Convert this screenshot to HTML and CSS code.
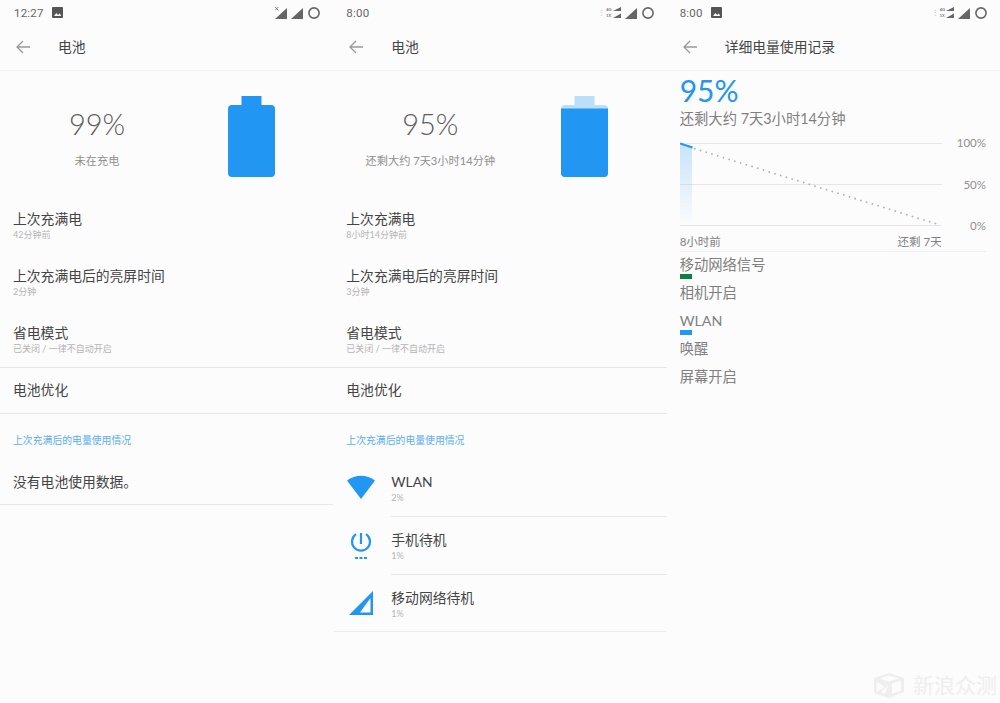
FILE: index.html
```html
<!DOCTYPE html>
<html lang="zh-CN">
<head>
<meta charset="UTF-8" />
<title>电池</title>
<link rel="stylesheet" href="styles.css">
</head>
<body>

<div class="screens">

  <!-- Screen 1: not charging -->
  <section class="screen">
    <div class="status">
      <span class="time">12:27</span>
      <svg class="pic" viewBox="0 0 11 11"><path d="M1 0h9a1 1 0 0 1 1 1v9a1 1 0 0 1-1 1H1a1 1 0 0 1-1-1V1a1 1 0 0 1 1-1z" fill="#555"/><path d="M2 9l2.4-3 1.7 2 1.6-1.7L9.2 9z" fill="#fcfcfc"/></svg>
      <span class="status-right">
        <svg class="sig" viewBox="0 0 12 12"><path d="M12 1v11H0z" fill="#666"/><path d="M0 0l3.4 3.4M3.4 0L0 3.4" stroke="#666" stroke-width=".8"/></svg>
        <svg class="sig" viewBox="0 0 12 12"><path d="M12 1v11H0z" fill="#666"/></svg>
        <svg class="ring" viewBox="0 0 12 12"><circle cx="6" cy="6" r="5.1" fill="none" stroke="#666" stroke-width="1.6"/></svg>
      </span>
    </div>
    <header class="bar">
      <svg class="back" viewBox="0 0 14 14"><path d="M14 7H1M7 1L1 7l6 6" fill="none" stroke="#999" stroke-width="1.3"/></svg>
      <h1>电池</h1>
    </header>
    <div class="hero">
      <div class="hero-text">
        <div class="pct">99%</div>
        <div class="remain">未在充电</div>
      </div>
      <svg class="batt" viewBox="0 0 47 81"><path d="M13.500 0h20v9H43a4 4 0 0 1 4 4v64a4 4 0 0 1-4 4H4a4 4 0 0 1-4-4V13a4 4 0 0 1 4-4h9.500z" fill="#2196f3"/></svg>
    </div>
    <div class="row"><div class="title">上次充满电</div><div class="sub">42分钟前</div></div>
    <div class="row"><div class="title">上次充满电后的亮屏时间</div><div class="sub">2分钟</div></div>
    <div class="row row-last"><div class="title">省电模式</div><div class="sub">已关闭 / 一律不自动开启</div></div>
    <div class="row-plain">电池优化</div>
    <div class="section-label">上次充满后的电量使用情况</div>
    <div class="row-empty">没有电池使用数据。</div>
  </section>

  <!-- Screen 2: usage list -->
  <section class="screen">
    <div class="status">
      <span class="time">8:00</span>
      <span class="status-right">
        <span class="dual">
          <span class="arrows">⋮</span>
          <span class="sims"><span>4G</span><span>1X</span></span>
          <svg class="mini" viewBox="0 0 8 11"><path d="M8 0v4H0zM8 6.500V11H0z" fill="#666"/></svg>
        </span>
        <svg class="sig" viewBox="0 0 12 12"><path d="M12 1v11H0z" fill="#666"/></svg>
        <svg class="ring" viewBox="0 0 12 12"><circle cx="6" cy="6" r="5.1" fill="none" stroke="#666" stroke-width="1.6"/></svg>
      </span>
    </div>
    <header class="bar">
      <svg class="back" viewBox="0 0 14 14"><path d="M14 7H1M7 1L1 7l6 6" fill="none" stroke="#999" stroke-width="1.3"/></svg>
      <h1>电池</h1>
    </header>
    <div class="hero">
      <div class="hero-text">
        <div class="pct">95%</div>
        <div class="remain">还剩大约 7天3小时14分钟</div>
      </div>
      <svg class="batt" viewBox="0 0 47 81"><path d="M13.500 0h20v9H43a4 4 0 0 1 4 4v64a4 4 0 0 1-4 4H4a4 4 0 0 1-4-4V13a4 4 0 0 1 4-4h9.500z" fill="#bbdefb"/><path d="M0 12.500h47V77a4 4 0 0 1-4 4H4a4 4 0 0 1-4-4z" fill="#2196f3"/></svg>
    </div>
    <div class="row"><div class="title">上次充满电</div><div class="sub">8小时14分钟前</div></div>
    <div class="row"><div class="title">上次充满电后的亮屏时间</div><div class="sub">3分钟</div></div>
    <div class="row row-last"><div class="title">省电模式</div><div class="sub">已关闭 / 一律不自动开启</div></div>
    <div class="row-plain">电池优化</div>
    <div class="section-label">上次充满后的电量使用情况</div>

    <div class="usage">
      <svg class="usage-icon" viewBox="0 0 30 30"><path d="M1 8.500C9 2.200 21 2.200 29 8.500L15 27z" fill="#2196f3"/></svg>
      <div class="usage-text"><div class="title">WLAN</div><div class="sub">2%</div></div>
    </div>
    <div class="usage">
      <svg class="usage-icon" viewBox="0 0 30 30"><path d="M15 3v11" stroke="#2196f3" stroke-width="2.200" fill="none"/><path d="M10 4.200a9 9 0 1 0 10 0" stroke="#2196f3" stroke-width="2.200" fill="none"/><path d="M9 28h3M13.500 28h3M18 28h3" stroke="#2196f3" stroke-width="2" fill="none"/></svg>
      <div class="usage-text"><div class="title">手机待机</div><div class="sub">1%</div></div>
    </div>
    <div class="usage usage-last">
      <svg class="usage-icon" viewBox="0 0 30 30"><path fill-rule="evenodd" d="M27 3v24H3zM24.500 10L14 24.500h10.500z" fill="#2196f3"/></svg>
      <div class="usage-text"><div class="title">移动网络待机</div><div class="sub">1%</div></div>
    </div>
  </section>

  <!-- Screen 3: detailed history -->
  <section class="screen">
    <div class="status">
      <span class="time">8:00</span>
      <svg class="pic" viewBox="0 0 11 11"><path d="M1 0h9a1 1 0 0 1 1 1v9a1 1 0 0 1-1 1H1a1 1 0 0 1-1-1V1a1 1 0 0 1 1-1z" fill="#555"/><path d="M2 9l2.4-3 1.7 2 1.6-1.7L9.2 9z" fill="#fcfcfc"/></svg>
      <span class="status-right">
        <span class="dual">
          <span class="arrows">⋮</span>
          <span class="sims"><span>4G</span><span>1X</span></span>
          <svg class="mini" viewBox="0 0 8 11"><path d="M8 0v4H0zM8 6.500V11H0z" fill="#666"/></svg>
        </span>
        <svg class="sig" viewBox="0 0 12 12"><path d="M12 1v11H0z" fill="#666"/></svg>
        <svg class="ring" viewBox="0 0 12 12"><circle cx="6" cy="6" r="5.1" fill="none" stroke="#666" stroke-width="1.6"/></svg>
      </span>
    </div>
    <header class="bar">
      <svg class="back" viewBox="0 0 14 14"><path d="M14 7H1M7 1L1 7l6 6" fill="none" stroke="#999" stroke-width="1.3"/></svg>
      <h1>详细电量使用记录</h1>
    </header>
    <div class="detail">
      <div class="detail-pct">95%</div>
      <div class="detail-remain">还剩大约 7天3小时14分钟</div>

      <div class="chart">
        <svg class="plot" viewBox="0 0 262 86">
          <defs>
            <linearGradient id="fade" x1="0" y1="0" x2="0" y2="1">
              <stop offset="0" stop-color="#2196f3" stop-opacity=".24"/>
              <stop offset="1" stop-color="#2196f3" stop-opacity="0"/>
            </linearGradient>
          </defs>
          <path d="M0 1.500H262M0 42.500H262M0 83.500H262" stroke="#e6e6e6" stroke-width="1"/>
          <path d="M0 2L12 6V84H0z" fill="url(#fade)"/>
          <path d="M14 6.500L260 83" stroke="#a3b2bc" stroke-width="1.600" stroke-dasharray="1.600 4.400" fill="none"/>
          <path d="M0 1.500L12.500 5.500" stroke="#2196f3" stroke-width="2" fill="none"/>
        </svg>
        <div class="y-labels"><span>100%</span><span>50%</span><span>0%</span></div>
      </div>
      <div class="x-labels"><span>8小时前</span><span>还剩 7天</span></div>

      <div class="track track-first">移动网络信号</div>
      <div class="track-bar track-green"></div>
      <div class="track track-after">相机开启</div>
      <div class="track track-next">WLAN</div>
      <div class="track-bar track-blue"></div>
      <div class="track track-after">唤醒</div>
      <div class="track track-next">屏幕开启</div>
    </div>
  </section>
</div>

<!-- Watermark -->
<div class="mark">
  <svg class="mark-logo" viewBox="0 0 30 25"><path d="M15 0l15 5v14l-15 6-15-5V5z" fill="#eee"/><path d="M5 5.500l10-3 10 3-10 3zM2.500 8.500l8 5.500-8 5zM14 12l-3 9-4-1.500zM18 10.500l9-3v10l-9 3.500z" fill="#fcfcfc"/></svg>
  <span>新浪众测</span>
</div>

</body>
</html>
```

FILE: styles.css
```css
/* General styling */
html, body {
  margin: 0;
  height: 703px;
  overflow: hidden;
}

body {
  position: relative;
  background: #fcfcfc;
  color: #444;
  font-family: Lato, "Noto Sans CJK SC", sans-serif;
}

.screens {
  display: grid;
  grid-template-columns: repeat(3, 1fr);
}

.screen {
  min-width: 0;
}

/* Status bar */
.status {
  display: flex;
  align-items: center;
  height: 25px;
  padding: 0 13px 0 14px;
  color: #666;
}

.screen + .screen .status {
  padding-left: 13px;
}

.time {
  font-family: Roboto, sans-serif;
  font-size: 11.500px;
  letter-spacing: 0.2px;
}

.pic {
  width: 11px;
  height: 11px;
  margin-left: 8px;
}

.status-right {
  display: flex;
  align-items: center;
  gap: 4px;
  margin-left: auto;
}

.sig {
  width: 12px;
  height: 12px;
}

.ring {
  width: 12px;
  height: 12px;
  margin-left: 1px;
}

.dual {
  display: flex;
  align-items: center;
  gap: 1px;
  height: 12px;
}

.arrows {
  font-size: 7px;
  line-height: 1;
  color: #bbb;
}

.sims {
  display: flex;
  flex-direction: column;
  font-family: "Liberation Sans", sans-serif;
  font-size: 4px;
  line-height: 6px;
  font-weight: 700;
  color: #777;
}

.mini {
  width: 8px;
  height: 11px;
}

/* Toolbar */
.bar {
  display: flex;
  align-items: center;
  height: 43px;
  padding-bottom: 2px;
  border-bottom: 1px solid #f0f0f0;
}

.back {
  width: 14px;
  height: 14px;
  margin-left: 16px;
}

.bar h1 {
  margin: 0 0 0 28px;
  font-size: 13.800px;
  line-height: 18px;
  font-weight: 400;
  color: #444;
}

/* Battery header */
.hero {
  display: flex;
  align-items: flex-start;
  height: 129px;
}

.hero-text {
  width: 194px;
  padding-top: 36px;
  text-align: center;
}

.pct {
  font-size: 29px;
  line-height: 34px;
  font-weight: 300;
  color: #5c5c5c;
}

.remain {
  margin-top: 12px;
  font-size: 11.200px;
  line-height: 16px;
  color: #909090;
}

.batt {
  width: 47px;
  height: 81px;
  margin: 25px 0 0 33.500px;
}

/* List rows */
.title {
  font-size: 13.800px;
  line-height: 18px;
  color: #444;
}

.sub {
  font-size: 9px;
  line-height: 14px;
  color: #b4b4b4;
}

.row {
  height: 57px;
  box-sizing: border-box;
  padding: 10px 13px 0;
}

.row-last {
  height: 54px;
  border-bottom: 1px solid #e8e8e8;
}

.row-plain {
  height: 46px;
  box-sizing: border-box;
  padding: 0 13px;
  font-size: 13.800px;
  line-height: 44px;
  border-bottom: 1px solid #e8e8e8;
}

.section-label {
  padding: 19px 13px 12px;
  font-size: 9.850px;
  line-height: 14px;
  color: #5aaef0;
}

.row-empty {
  height: 46px;
  box-sizing: border-box;
  padding: 0 13px;
  font-size: 13.800px;
  line-height: 45px;
  border-bottom: 1px solid #e8e8e8;
}

/* Usage list */
.usage {
  display: flex;
  align-items: flex-start;
  height: 58px;
  box-sizing: border-box;
}

.usage-icon {
  width: 30px;
  height: 30px;
  margin: 13px 0 0 13px;
  flex: none;
}

.usage-text {
  flex: 1;
  height: 100%;
  box-sizing: border-box;
  margin-left: 15px;
  padding-top: 14px;
  border-bottom: 1px solid #e8e8e8;
}

.usage-last {
  height: 56px;
  box-shadow: 0 1px 0 #ececec;
}

.usage-last .usage-text {
  border-bottom: none;
}

/* Detail screen */
.detail {
  padding: 2px 14px 0 13px;
}

.detail-pct {
  font-size: 30px;
  line-height: 34px;
  color: #2196f3;
}

.detail-remain {
  margin-top: 2px;
  font-size: 14.330px;
  line-height: 20px;
  color: #808080;
}

.chart {
  display: flex;
  justify-content: space-between;
  margin-top: 13px;
}

.plot {
  display: block;
  width: 262px;
  height: 86px;
}

.y-labels {
  display: flex;
  flex-direction: column;
  justify-content: space-between;
  height: 97px;
  margin-top: -6px;
  text-align: right;
  font-size: 11.500px;
  line-height: 14px;
  color: #909090;
}

.x-labels {
  display: flex;
  justify-content: space-between;
  width: 262px;
  height: 17px;
  margin-top: 1px;
  font-size: 11.500px;
  line-height: 16px;
  color: #808080;
}

.track {
  font-size: 14.300px;
  line-height: 20px;
  color: #808080;
}

.track-first {
  padding-top: 3px;
  border-top: 1px solid #eee;
}

.track-bar {
  width: 12px;
  height: 5px;
  margin-top: -1px;
}

.track-green {
  background: #0b8043;
}

.track-blue {
  background: #2196f3;
}

.track-after {
  margin-top: 4px;
}

.track-next {
  margin-top: 8px;
}

/* Watermark sits over the page corner */
.mark {
  position: absolute;
  right: 3px;
  bottom: 5px;
  display: flex;
  align-items: center;
  gap: 9px;
  font-size: 21px;
  line-height: 26px;
  color: #eee;
}

.mark-logo {
  width: 30px;
  height: 25px;
}
```
